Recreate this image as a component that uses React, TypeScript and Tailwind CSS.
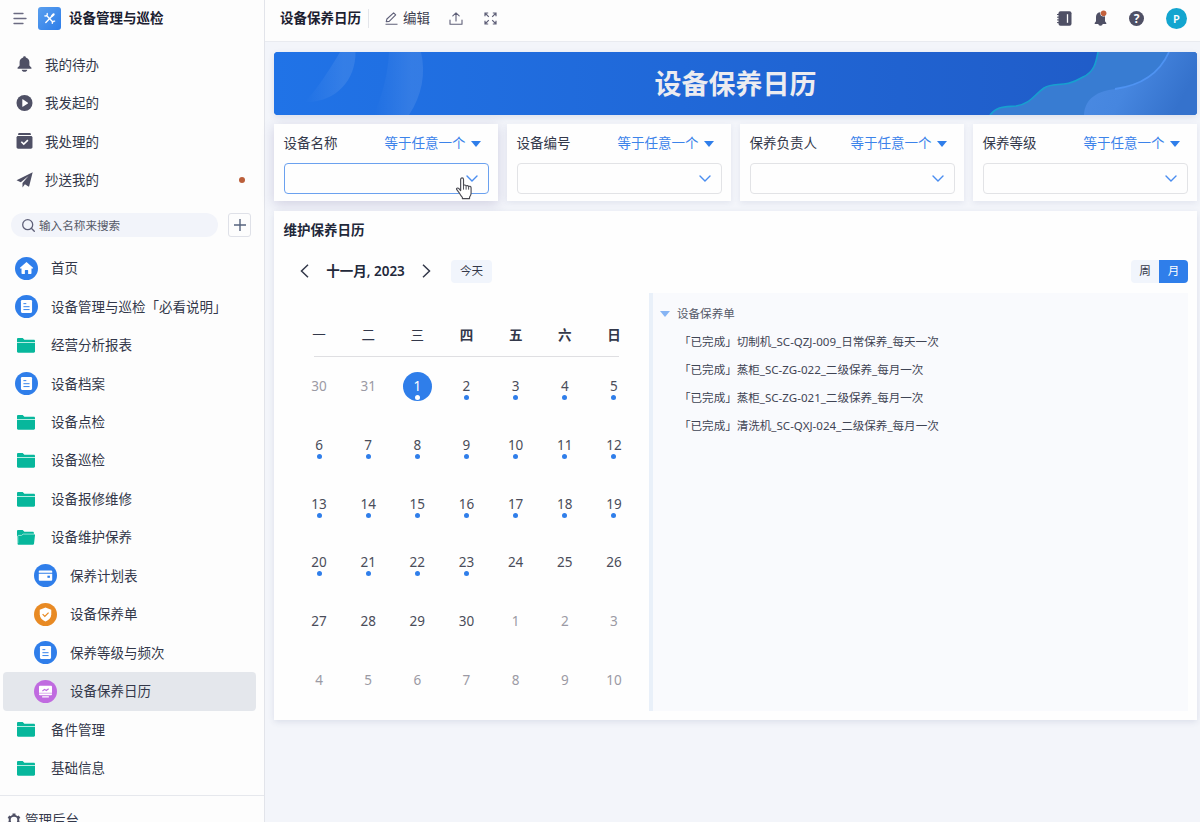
import React from 'react';
import clsx from 'clsx';

type IconProps = { className?: string };

const MenuIcon = ({ className }: IconProps) => (
    <svg viewBox="0 0 14 13" className={className} fill="none" stroke="#6b6b82" strokeWidth="1.3" strokeLinecap="round">
        <path d="M1 1.5h9M1 6.5h12M1 11.5h9" />
    </svg>
);

const ToolsIcon = ({ className }: IconProps) => (
    <svg viewBox="0 0 23 23" className={className}>
        <defs>
            <linearGradient id="logo" x1="0" y1="0" x2="1" y2="1">
                <stop offset="0" stopColor="#5a9fee" />
                <stop offset="1" stopColor="#2d7de9" />
            </linearGradient>
        </defs>
        <rect width="23" height="23" rx="3" fill="url(#logo)" />
        <g fill="none" stroke="#fff" strokeLinecap="round">
            <path d="M8.800 8.800l6 6.200" strokeWidth="1.4" />
            <path d="M13.600 9.600l-5.800 6" strokeWidth="1.4" />
            <path d="M6.800 8.900a1.900 1.900 0 0 0 2.400-2.400M16.600 14.100a1.900 1.900 0 0 0-2.300 2.300" strokeWidth="1.300" />
            <path d="M14 9l1.600-1.600" strokeWidth="2.200" />
        </g>
    </svg>
);

const BellIcon = ({ className }: IconProps) => (
    <svg viewBox="0 0 16 17" className={className} fill="#4f5065">
        <path d="M8 .3c.9 0 1.400.6 1.400 1.300 2.400.6 3.800 2.500 3.800 4.900v3.600l2.200 2.500c.3.500.1 1-.4 1H1c-.5 0-.7-.5-.4-1l2.200-2.500V6.500c0-2.400 1.400-4.300 3.800-4.900C6.600.9 7.100.3 8 .3z" />
        <path d="M5 14.500h6c-.3 1.400-1.400 2.300-3 2.300s-2.700-.9-3-2.300z" />
    </svg>
);

const PlayIcon = ({ className }: IconProps) => (
    <svg viewBox="0 0 16 16" className={className}>
        <circle cx="8" cy="8" r="8" fill="#4f5065" />
        <path d="M5.800 4.600v6.800c0 .3.300.4.500.3l5.100-3.300c.2-.2.2-.6 0-.7L6.300 4.300c-.2-.1-.5 0-.5.3z" fill="#fff" />
    </svg>
);

const HandledIcon = ({ className }: IconProps) => (
    <svg viewBox="0 0 16 15" className={className}>
        <path d="M2 1.200C2 .5 2.500 0 3.200 0h9.600c.7 0 1.200.5 1.200 1.200v.6H2z" fill="#4f5065" />
        <path d="M.5 4.200c0-.9.600-1.500 1.500-1.500h12c.9 0 1.500.6 1.500 1.500v9c0 .9-.6 1.500-1.500 1.500H2c-.9 0-1.500-.6-1.500-1.500z" fill="#4f5065" />
        <path d="M5 8.200l2.300 2.300L11.200 6.700" fill="none" stroke="#fff" strokeWidth="1.500" />
    </svg>
);

const PlaneIcon = ({ className }: IconProps) => (
    <svg viewBox="0 0 16 15" className={className} fill="#4f5065">
        <path d="M15.700.3L.5 7.800l4 1.800 7.300-5.900-5.700 6.700v4.200l2.300-3.100 3.300 2.200c.3.200.6 0 .7-.3z" />
    </svg>
);

const SearchIcon = ({ className }: IconProps) => (
    <svg viewBox="0 0 13 13" className={className} fill="none" stroke="#5f6078" strokeWidth="1.300" strokeLinecap="round">
        <circle cx="5.700" cy="5.700" r="5" />
        <path d="M9.300 9.300l3 3" />
    </svg>
);

const FolderIcon = ({ className }: IconProps) => (
    <svg viewBox="0 0 18 15" className={className}>
        <path d="M0 1.200C0 .5.500 0 1.200 0h4.500l1.700 1.700h9.400c.7 0 1.200.5 1.200 1.200v10.700c0 .7-.5 1.200-1.200 1.200H1.200c-.7 0-1.200-.5-1.200-1.200z" fill="#07b79c" />
        <path d="M0 4.500h18" stroke="#b5ece2" strokeWidth="1" />
    </svg>
);

const FolderOpenIcon = ({ className }: IconProps) => (
    <svg viewBox="0 0 18 15" className={className}>
        <path d="M0 1.200C0 .5.500 0 1.200 0h4.500l1.700 1.700h8.300c.7 0 1.200.5 1.200 1.200v3H0z" fill="#07b79c" />
        <path d="M.2 5l.4 8.700c0 .6.400 1 1 1h14.300c.6 0 1-.4 1.100-1L18 5.200c.1-.5-.2-.9-.7-.9H6.200L4.800 5.400H1.300z" fill="#07b79c" />
        <path d="M.8 13V6.200c0-.5.300-.8.800-.8h3l1.500-1.300h11.300" fill="none" stroke="#b5ece2" strokeWidth=".8" />
    </svg>
);

const HomeIcon = ({ className }: IconProps) => (
    <svg viewBox="0 0 24 24" className={className}>
        <circle cx="12" cy="12" r="12" fill="#2f7eea" />
        <path d="M12 5.200l-6.800 6c-.3.300-.2.700.3.700h1.300v5c0 .5.300.8.800.8h2.700v-3.600c0-.4.300-.6.600-.6h2.200c.4 0 .6.2.6.6v3.600h2.700c.5 0 .8-.3.8-.8v-5h1.300c.5 0 .6-.4.3-.7z" fill="#fff" />
    </svg>
);

const DocIcon = ({ className }: IconProps) => (
    <svg viewBox="0 0 24 24" className={className}>
        <circle cx="12" cy="12" r="12" fill="#2f7eea" />
        <rect x="6.200" y="5.300" width="11.600" height="13.400" rx="1.200" fill="#fff" />
        <path d="M8.800 9h3M8.800 12.200h6.400M8.800 15.200h6.400" stroke="#2f7eea" strokeWidth="1" />
    </svg>
);

const CardIcon = ({ className }: IconProps) => (
    <svg viewBox="0 0 24 24" className={className}>
        <circle cx="12" cy="12" r="12" fill="#2f7eea" />
        <path d="M5 7.800c0-.6.400-1 1-1h12c.6 0 1 .4 1 1V9H5z" fill="#fff" />
        <path d="M5 10.200h14v6.300c0 .6-.4 1-1 1H6c-.6 0-1-.4-1-1z" fill="#fff" />
        <rect x="14" y="12.200" width="2.600" height="2.200" fill="#2f7eea" />
    </svg>
);

const ShieldIcon = ({ className }: IconProps) => (
    <svg viewBox="0 0 24 24" className={className}>
        <circle cx="12" cy="12" r="12" fill="#e88a24" />
        <path d="M12 4.800l6 2.200v5c0 3.500-2.500 5.900-6 7.400-3.500-1.500-6-3.900-6-7.400V7z" fill="#fff" />
        <path d="M9 11.600l2.300 2.300 3.900-3.900" fill="none" stroke="#e88a24" strokeWidth="1.300" />
    </svg>
);

const BoardIcon = ({ className }: IconProps) => (
    <svg viewBox="0 0 24 24" className={className}>
        <circle cx="12" cy="12" r="12" fill="#c06be0" />
        <rect x="5.200" y="6" width="13.600" height="9.800" rx="1" fill="#fff" />
        <path d="M8.800 11.500l2.200-1.700 1.800 1.200 2.500-1.900" fill="none" stroke="#c06be0" strokeWidth="1.200" />
        <path d="M5.200 13.800h13.600" stroke="#c06be0" strokeWidth=".6" />
        <path d="M8.500 17.600h7" stroke="#fff" strokeWidth="1.300" />
    </svg>
);

const GearIcon = ({ className }: IconProps) => (
    <svg viewBox="0 0 14 14" className={className} fill="none" stroke="#4f5065">
        <circle cx="7" cy="7" r="4.300" strokeWidth="2" />
        <path d="M7 .5v2M7 11.500v2M1.400 3.700l1.800 1.100M10.800 9.200l1.800 1.100M1.400 10.300l1.800-1.100M10.800 4.800l1.800-1.100" strokeWidth="3" />
    </svg>
);

const ChevronIcon = ({ className }: IconProps) => (
    <svg viewBox="0 0 12 7" className={className} fill="none" stroke="#4a8df0" strokeWidth="1.400" strokeLinecap="round">
        <path d="M1 1l5 5 5-5" />
    </svg>
);

const HandCursor = ({ className }: IconProps) => (
    <svg viewBox="0 0 18 24" className={className} fill="#fff" stroke="#4a4a52" strokeWidth="1.200" strokeLinejoin="round">
        <path d="M5.500 14.200V2.600c0-1 .6-1.700 1.500-1.700s1.500.7 1.500 1.700v6.200c.3-.7 2.500-.7 2.700.5.500-.7 2.400-.5 2.600.7.600-.6 2.600-.3 2.600 1.300V17c0 2-.7 3-1.600 4v1.500H7.300v-1.300c-1.400-1.300-2.400-3-3.500-5L1.300 13c-.4-.8.300-1.700 1.300-1.500.8.200 1.800 1.200 2.900 2.700z" />
        <path d="M8.500 8.800v4.400M11.200 9.600v3.600M13.800 10.300v2.900" fill="none" strokeWidth="1" />
    </svg>
);

const quickLinks = [
    { label: '我的待办', icon: BellIcon, dot: false },
    { label: '我发起的', icon: PlayIcon, dot: false },
    { label: '我处理的', icon: HandledIcon, dot: false },
    { label: '抄送我的', icon: PlaneIcon, dot: true },
];

const navItems = [
    { label: '首页', icon: HomeIcon, kind: 'round' },
    { label: '设备管理与巡检「必看说明」', icon: DocIcon, kind: 'round' },
    { label: '经营分析报表', icon: FolderIcon, kind: 'folder' },
    { label: '设备档案', icon: DocIcon, kind: 'round' },
    { label: '设备点检', icon: FolderIcon, kind: 'folder' },
    { label: '设备巡检', icon: FolderIcon, kind: 'folder' },
    { label: '设备报修维修', icon: FolderIcon, kind: 'folder' },
    { label: '设备维护保养', icon: FolderOpenIcon, kind: 'folder' },
    { label: '保养计划表', icon: CardIcon, kind: 'round', child: true },
    { label: '设备保养单', icon: ShieldIcon, kind: 'round', child: true },
    { label: '保养等级与频次', icon: DocIcon, kind: 'round', child: true },
    { label: '设备保养日历', icon: BoardIcon, kind: 'round', child: true, active: true },
    { label: '备件管理', icon: FolderIcon, kind: 'folder' },
    { label: '基础信息', icon: FolderIcon, kind: 'folder' },
];

const filters = ['设备名称', '设备编号', '保养负责人', '保养等级'];
const weekdays = ['一', '二', '三', '四', '五', '六', '日'];

// Six weeks starting on Monday, 30 October 2023
const days = Array.from({ length: 42 }, (_, i) => {
    const n = i - 1;
    if (n < 1) return { day: n + 31, current: false, dot: false };
    if (n > 30) return { day: n - 30, current: false, dot: false };
    return { day: n, current: true, dot: n <= 23 };
});

const records = [
    '「已完成」切制机_SC-QZJ-009_日常保养_每天一次',
    '「已完成」蒸柜_SC-ZG-022_二级保养_每月一次',
    '「已完成」蒸柜_SC-ZG-021_二级保养_每月一次',
    '「已完成」清洗机_SC-QXJ-024_二级保养_每月一次',
];

const Sidebar = () => (
    <aside className="flex h-full w-[265px] shrink-0 flex-col border-r border-[#e2e4ea] bg-[#fdfdfd]">
        <div className="flex h-[45px] shrink-0 items-start pt-[7px] pl-[13px]">
            <MenuIcon className="mt-[5px] h-[13px] w-[14px]" />
            <ToolsIcon className="ml-[11px] h-[23px] w-[23px]" />
            <span className="ml-2 text-[13.5px] leading-[23px] font-bold text-[#1b2030]">设备管理与巡检</span>
        </div>
        {quickLinks.map(({ label, icon: Icon, dot }) => (
            <a key={label} className="flex h-[38.5px] shrink-0 items-center pr-[19px] pl-4">
                <Icon className="h-4 w-[17px]" />
                <span className="ml-3 pt-px">{label}</span>
                {dot && <i className="ml-auto h-1.5 w-1.5 rounded-full bg-[#bb5f3a]" />}
            </a>
        ))}
        <div className="mt-[14px] flex h-6 shrink-0 items-center pl-[11px]">
            <div className="flex h-6 w-[207px] items-center rounded-full bg-[#f2f4fa] pl-[11px]">
                <SearchIcon className="h-[13px] w-[13px]" />
                <span className="ml-1 pt-px text-[11.6px] text-[#565a68]">输入名称来搜索</span>
            </div>
            <button className="ml-[10px] flex h-6 w-[23px] items-center justify-center rounded-[3px] border border-[#dfe1e8]">
                <svg viewBox="0 0 12 12" className="h-3 w-3" stroke="#55637d" strokeWidth="1.4">
                    <path d="M0 6h12M6 0v12" />
                </svg>
            </button>
        </div>
        <nav className="mt-[12px] flex h-[538.5px] shrink-0 flex-col pr-2 pl-[3px]">
            {navItems.map(({ label, icon: Icon, kind, child, active }) => (
                <a
                    key={label}
                    className={clsx(
                        'flex flex-1 items-center rounded',
                        child ? 'pl-[30px]' : 'pl-[11px]',
                        active && 'bg-[#e4e7ec]'
                    )}
                >
                    <span className="flex w-6 justify-center">
                        <Icon className={kind === 'round' ? 'h-[23px] w-[23px]' : 'h-[15px] w-[18px]'} />
                    </span>
                    <span className="ml-[13px] whitespace-nowrap">{label}</span>
                </a>
            ))}
        </nav>
        <div className="mt-[7px] flex h-[60px] shrink-0 items-start border-t border-[#e6e8ed] pt-[15px] pl-[7px]">
            <GearIcon className="mt-[2px] h-[14px] w-[14px]" />
            <span className="ml-1 leading-[18px]">管理后台</span>
        </div>
    </aside>
);

const TopBar = () => (
    <header className="flex h-[42px] shrink-0 items-center border-b border-[#e9ebf0] bg-[#fdfdfd] pr-[13px] pb-1 pl-[15px]">
        <span className="font-bold text-[#1b2030]">设备保养日历</span>
        <i className="ml-[7px] h-[19px] w-px bg-[#e3e5ea]" />
        <svg viewBox="0 0 13 13" className="ml-4 h-[13px] w-[13px]" fill="none" stroke="#5f6078" strokeWidth="1.1" strokeLinejoin="round">
            <path d="M1.200 9.800l.7-2.800L8.600.8l2.100 2.100-6.500 6.500zM.5 12.300h12" />
        </svg>
        <span className="ml-[5px] text-[#3d4050]">编辑</span>
        <svg viewBox="0 0 14 13" className="ml-[19px] h-[13px] w-[14px]" fill="none" stroke="#5f6078" strokeWidth="1.1" strokeLinecap="round" strokeLinejoin="round">
            <path d="M7 9V1M3.800 3.800L7 .8l3.200 3M1 8v4.200h12V8" />
        </svg>
        <svg viewBox="0 0 13 13" className="ml-[21px] h-[13px] w-[13px]" fill="none" stroke="#5f6078" strokeWidth="1.200">
            <path d="M4.200 1H1v3.200M8.800 1H12v3.200M4.200 12H1V8.800M8.800 12H12V8.800M1 1l3.800 3.800M12 1L8.200 4.800M1 12l3.800-3.800M12 12L8.200 8.200" />
        </svg>
        <div className="ml-auto flex items-center">
            <svg viewBox="0 0 15 15" className="h-[15px] w-[15px]">
                <rect x="1.500" y=".2" width="13" height="14.600" rx="2" fill="#4f5065" />
                <path d="M0 3.500h2.500M0 6.200h2.500M0 8.900h2.500M0 11.600h2.500" stroke="#4f5065" strokeWidth="1" />
                <path d="M10.500 3.200v8.600" stroke="#fff" strokeWidth="1.300" />
            </svg>
            <svg viewBox="0 0 14 17" className="ml-[22px] h-[17px] w-[14px]">
                <path d="M6.500 2.200c2.700 0 4.500 1.800 4.500 4.600v4.400l1.300 1.700v1H.7v-1L2 11.200V6.800c0-2.800 1.800-4.600 4.500-4.600z" fill="#4f5065" />
                <path d="M4.300 13.500h4.400c0 1.500-.9 2.200-2.200 2.200s-2.200-.7-2.200-2.200z" fill="#4f5065" />
                <circle cx="9.600" cy="3.300" r="3.300" fill="#fdfdfd" />
                <circle cx="9.600" cy="3.300" r="2.800" fill="#c3613d" />
            </svg>
            <span className="ml-[21px] flex h-[15px] w-[15px] items-center justify-center rounded-full bg-[#4f5065] text-[12px] leading-none font-bold text-white">?</span>
            <span className="ml-[22px] flex h-[21px] w-[21px] items-center justify-center rounded-full bg-[#13a5cf] text-[11px] leading-none font-semibold text-white">P</span>
        </div>
    </header>
);

const Banner = () => (
    <div className="relative flex h-[63px] shrink-0 items-center justify-center overflow-hidden rounded bg-[#2068d9] shadow-[0_2px_6px_rgba(60,70,120,0.12)]">
        <svg viewBox="0 0 923 63" preserveAspectRatio="none" className="absolute inset-0 h-full w-full">
            <defs>
                <linearGradient id="base" x1="0" x2="1">
                    <stop offset="0" stopColor="#2073e7" />
                    <stop offset="1" stopColor="#205ac5" />
                </linearGradient>
                <linearGradient id="shine">
                    <stop offset="0" stopColor="#fff" stopOpacity="0" />
                    <stop offset=".75" stopColor="#fff" stopOpacity=".09" />
                    <stop offset="1" stopColor="#fff" stopOpacity=".09" />
                </linearGradient>
                <linearGradient id="wave" x1="0" y1="0" x2="1" y2=".3">
                    <stop offset="0" stopColor="#4b8be3" />
                    <stop offset=".5" stopColor="#4686df" />
                    <stop offset="1" stopColor="#3572cc" />
                </linearGradient>
            </defs>
            <path d="M0 0h923v63H0z" fill="url(#base)" />
            <path d="M66 0h15.500c.5 28-20 51-50.500 50 10-11 19-23 35-50z" fill="url(#shine)" />
            <path d="M115 0h32c5 22 1 43-12 63h-35c8-20 14-40 15-63z" fill="url(#shine)" />
            <path d="M824 0c-2 11-4 20-15 25-20 12-28 4-39 11-10 7-14 16-28 18-12 1-19 0-26 9h207V0z" fill="#387cd2" />
            <path d="M824 0c-2 11-4 20-15 25-20 12-28 4-39 11-10 7-14 16-28 18-12 1-19 0-26 9" fill="none" stroke="#17a0cf" strokeWidth="1.600" />
            <path d="M895 0c-8 18-24 33-54 37-17 2-30 9-31 26h113V0z" fill="url(#wave)" />
            <path d="M895 0c-8 18-24 33-54 37" fill="none" stroke="#4f93f2" strokeWidth="1.800" />
        </svg>
        <h1 className="relative text-[27px] leading-none font-bold text-[#ececf0]">设备保养日历</h1>
    </div>
);

const FilterCard = ({ label, active }: { label: string; active: boolean }) => (
    <div className={clsx('h-[77px] bg-[#fefefe] px-[9.5px] pt-[10px]', active ? 'shadow-[0_3px_12px_rgba(70,60,130,0.2)]' : 'shadow-[0_2px_6px_rgba(60,70,120,0.09)]')}>
        <div className="flex h-[19px] items-center pr-2">
            <span>{label}</span>
            <span className="ml-auto text-[#3c83ea]">等于任意一个</span>
            <i className="mt-px ml-[5px] border-x-[5px] border-t-[6px] border-x-transparent border-t-[#2f7eea]" />
        </div>
        <div className={clsx('relative mt-[9.5px] flex h-[31px] items-center justify-end rounded border pr-[10px]', active ? 'border-[#6ba1ef]' : 'border-[#e2e3e6]')}>
            <ChevronIcon className="h-[7px] w-3" />
            {active && <HandCursor className="absolute top-[13px] right-[15px] h-[23px] w-[18px]" />}
        </div>
    </div>
);

const CalendarCard = () => (
    <section className="flex h-[509.5px] flex-col bg-[#fefefe] shadow-[0_2px_6px_rgba(60,70,120,0.12)]">
        <h2 className="pt-[10px] pl-[9.5px] leading-[19px] font-bold text-[#22283a]">维护保养日历</h2>
        <div className="mt-5 flex h-[23px] items-center pr-[9px] pl-[26px]">
            <svg viewBox="0 0 9 14" className="h-[14px] w-[9px]" fill="none" stroke="#33384a" strokeWidth="1.500">
                <path d="M8 .8L1.500 7 8 13.200" />
            </svg>
            <span className="ml-[17px] w-[79px] text-center text-[13.5px] font-semibold whitespace-nowrap text-[#22283a]">十一月, 2023</span>
            <svg viewBox="0 0 9 14" className="ml-[17px] h-[14px] w-[9px]" fill="none" stroke="#33384a" strokeWidth="1.500">
                <path d="M1 .8L7.500 7 1 13.200" />
            </svg>
            <button className="ml-[20px] h-[23px] w-[41px] rounded bg-[#f1f5fc] text-[11.6px] leading-none">今天</button>
            <div className="ml-auto flex h-[23px] overflow-hidden rounded text-[11.6px]">
                <button className="w-7 bg-[#f1f5fc]">周</button>
                <button className="w-[29px] bg-[#2f7eea] text-white">月</button>
            </div>
        </div>
        <div className="mt-[10px] flex h-[418px] pr-[9px]">
            <div className="w-[375px] pl-[20.5px]">
                <div className="grid h-[58px] w-[344px] grid-cols-7 pt-[27px] text-center leading-[30px] text-[#33384a]">
                    {weekdays.map((d, i) => (
                        <span key={d} className={i < 3 ? 'font-normal' : 'font-bold'}>{d}</span>
                    ))}
                </div>
                <div className="mt-[5px] ml-[19px] h-px w-[305px] bg-[#dfdfe2]" />
                <div className="mt-[1px] grid h-[352px] w-[344px] grid-cols-7 grid-rows-6">
                    {days.map(({ day, current, dot }, i) => {
                        const selected = current && day === 1;
                        return (
                            <div key={i} className="flex items-center justify-center">
                                <div
                                    className={clsx(
                                        'flex h-[29px] w-[29px] flex-col items-center rounded-full pt-[5px] leading-[19px]',
                                        selected ? 'bg-[#2f7eea] text-white' : current ? 'text-[#4a4d5a]' : 'text-[#9b9aa4]'
                                    )}
                                >
                                    {day}
                                    {dot && <i className={clsx('-mt-px h-[5px] w-[5px] shrink-0 rounded-full', selected ? 'bg-white' : 'bg-[#2f7eea]')} />}
                                </div>
                            </div>
                        );
                    })}
                </div>
            </div>
            <div className="flex-1 border-l-4 border-[#e9f0f9] bg-[#f9fafd] pt-[7.5px] text-[11.55px] text-[#3f4454]">
                <div className="flex h-7 items-center pl-[7px]">
                    <i className="border-x-[5px] border-t-[6px] border-x-transparent border-t-[#86b4f4]" />
                    <span className="ml-[7px] text-[#555968]">设备保养单</span>
                </div>
                {records.map((r) => (
                    <div key={r} className="flex h-[27.800px] items-center pl-[26px] whitespace-nowrap">{r}</div>
                ))}
            </div>
        </div>
    </section>
);

export default function App() {
    return (
        <div className="flex h-[822px] w-[1200px] overflow-hidden bg-[#f3f5fa] font-['Noto_Sans','Noto_Sans_CJK_SC',sans-serif] text-[13.5px] text-[#33384a]">
            <Sidebar />
            <div className="flex min-w-0 flex-1 flex-col">
                <TopBar />
                <main className="flex flex-col gap-[9.5px] pt-[9.500px] pr-[3px] pl-[9px]">
                    <Banner />
                    <div className="grid grid-cols-4 gap-[9px]">
                        {filters.map((label, i) => (
                            <FilterCard key={label} label={label} active={i === 0} />
                        ))}
                    </div>
                    <CalendarCard />
                </main>
            </div>
        </div>
    );
}
